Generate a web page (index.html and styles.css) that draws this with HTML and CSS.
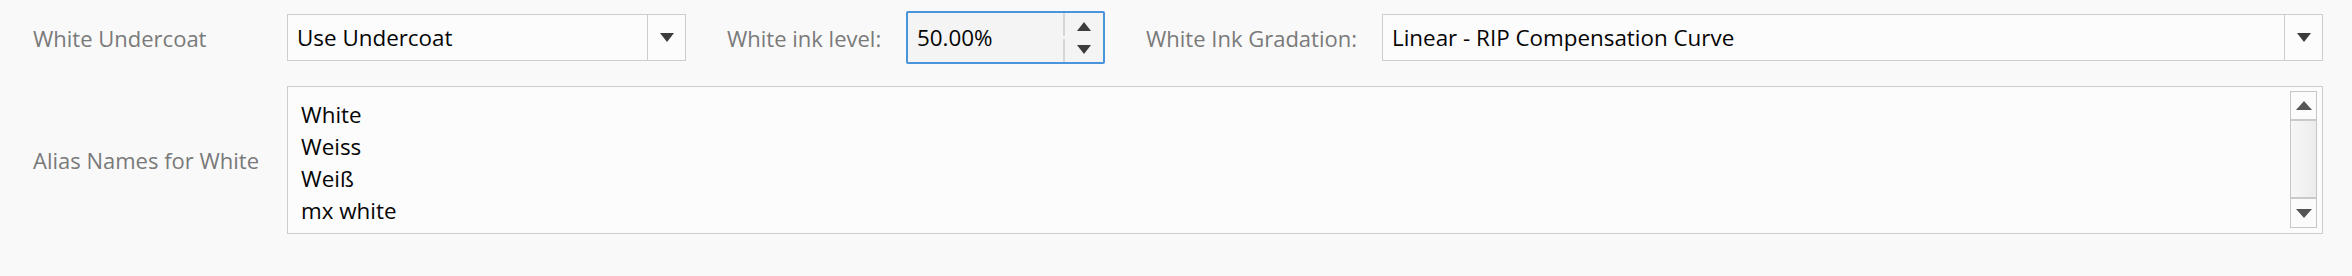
FILE: index.html
```html
<!DOCTYPE html>
<html>
<head>
<meta charset="utf-8">
<link rel="stylesheet" href="styles.css">
</head>
<body>
<div class="form">
  <div class="label">White Undercoat</div>
  <div class="row">
    <div class="select sel1">
      <div class="value">Use Undercoat</div>
      <div class="drop"><svg width="14" height="9" viewBox="0 0 14 9"><polygon points="0,0 14,0 7,9" fill="#3c3c3c"/></svg></div>
    </div>
    <div class="label inline lvl">White ink level:</div>
    <div class="spin">
      <div class="value">50.00%</div>
      <div class="spinbtns">
        <div class="sbtn"><svg width="14" height="9" viewBox="0 0 14 9"><polygon points="0,9 14,9 7,0" fill="#3c3c3c"/></svg></div>
        <div class="sbtn"><svg width="14" height="9" viewBox="0 0 14 9"><polygon points="0,0 14,0 7,9" fill="#3c3c3c"/></svg></div>
      </div>
    </div>
    <div class="label inline grad">White Ink Gradation:</div>
    <div class="select sel2">
      <div class="value">Linear - RIP Compensation Curve</div>
      <div class="drop"><svg width="14" height="9" viewBox="0 0 14 9"><polygon points="0,0 14,0 7,9" fill="#3c3c3c"/></svg></div>
    </div>
  </div>
  <div class="label">Alias Names for White</div>
  <div class="listbox">
    <div class="lines">
      <div>White</div>
      <div>Weiss</div>
      <div>Weiß</div>
      <div>mx white</div>
    </div>
    <div class="scrollbar">
      <div class="sb-btn up"><svg width="16" height="9" viewBox="0 0 16 9"><polygon points="0,9 16,9 8,0" fill="#555"/></svg></div>
      <div class="sb-thumb"></div>
      <div class="sb-btn down"><svg width="16" height="9" viewBox="0 0 16 9"><polygon points="0,0 16,0 8,9" fill="#555"/></svg></div>
    </div>
  </div>
</div>
</body>
</html>
```
FILE: styles.css
```css
html, body {
  margin: 0;
  padding: 0;
  background: #f9f9f9;
}
body {
  font-family: "Open Sans", "Noto Sans", sans-serif;
  font-size: 22.4px;
  color: #050505;
  width: 2352px;
  height: 276px;
  overflow: hidden;
}
.form {
  display: grid;
  grid-template-columns: 254px 1fr;
  row-gap: 22px;
  padding: 11px 29px 0 33px;
  align-items: center;
}
.label {
  color: #7a7a7a;
  white-space: nowrap;
  font-size: 22px;
}
.row {
  display: flex;
  align-items: center;
  height: 53px;
}
.select {
  box-sizing: border-box;
  height: 47px;
  border: 1px solid #cdcdcd;
  background: #fcfcfc;
  display: flex;
  align-items: stretch;
}
.sel1 { width: 399px; }
.sel2 { flex: 1; }
.value {
  flex: 1;
  display: flex;
  align-items: center;
  padding-left: 9px;
  white-space: nowrap;
}
.drop {
  width: 37px;
  border-left: 1px solid #cdcdcd;
  display: flex;
  align-items: center;
  justify-content: center;
}
.label.inline {
  box-sizing: border-box;
}
.lvl {
  width: 220px;
  padding-left: 41px;
}
.grad {
  width: 277px;
  padding-left: 41px;
}
.spin {
  box-sizing: border-box;
  width: 199px;
  height: 53px;
  border: 2px solid #4a94dc;
  border-radius: 2px;
  background: #f4f4f4;
  display: flex;
}
.spin .value {
  padding-left: 9px;
}
.spinbtns {
  width: 40px;
  display: flex;
  flex-direction: column;
  gap: 3px;
}
.sbtn {
  flex: 1;
  display: flex;
  align-items: center;
  justify-content: center;
  border-left: 2px solid #d6d6d6;
}
.sbtn:first-child { padding-top: 3px; }
.sbtn:last-child { padding-bottom: 3px; }
.listbox {
  box-sizing: border-box;
  height: 148px;
  border: 1px solid #cdcdcd;
  background: #fcfcfc;
  display: flex;
  justify-content: space-between;
  padding: 4px 5px 5px 13px;
}
.lines {
  padding-top: 8px;
  line-height: 32px;
}
.scrollbar {
  box-sizing: border-box;
  width: 27px;
  border: 1px solid #c6c6c6;
  display: flex;
  flex-direction: column;
}
.sb-btn {
  display: flex;
  align-items: center;
  justify-content: center;
  background: #fbfbfb;
}
.sb-btn.up { height: 27px; border-bottom: 2px solid #c9c9c9; }
.sb-btn.down { height: 28px; border-top: 2px solid #c9c9c9; }
.sb-thumb {
  flex: 1;
  background: linear-gradient(to right, #f7f7f7, #ececec);
}
```
